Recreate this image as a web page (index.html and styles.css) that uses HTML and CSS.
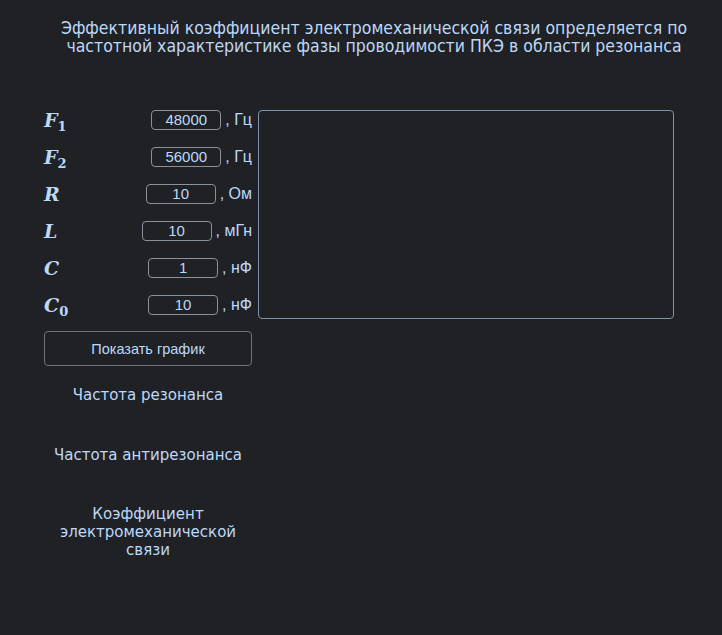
FILE: index.html
```html
<!DOCTYPE html>
<html lang="ru">
<head>
<meta charset="utf-8">
<link rel="stylesheet" href="styles.css">
</head>
<body>
<h1 class="title">Эффективный коэффициент электромеханической связи определяется по<br>частотной характеристике фазы проводимости ПКЭ в области резонанса</h1>
<div class="main">
  <div class="left">
    <div class="params">
      <div class="row"><span class="sym">F<sub>1</sub></span><span class="grp"><span class="inp">48000</span><span class="unit">, Гц</span></span></div>
      <div class="row"><span class="sym">F<sub>2</sub></span><span class="grp"><span class="inp">56000</span><span class="unit">, Гц</span></span></div>
      <div class="row"><span class="sym">R</span><span class="grp"><span class="inp">10</span><span class="unit">, Ом</span></span></div>
      <div class="row"><span class="sym">L</span><span class="grp"><span class="inp">10</span><span class="unit">, мГн</span></span></div>
      <div class="row"><span class="sym">C</span><span class="grp"><span class="inp">1</span><span class="unit">, нФ</span></span></div>
      <div class="row"><span class="sym">C<sub>0</sub></span><span class="grp"><span class="inp">10</span><span class="unit">, нФ</span></span></div>
    </div>
    <button class="btn">Показать график</button>
    <div class="res r1">Частота резонанса</div>
    <div class="res r2">Частота антирезонанса</div>
    <div class="res r3"><div>Коэффициент</div><div>электромеханической</div><div>связи</div></div>
  </div>
  <div class="graph"></div>
</div>
</body>
</html>
```

FILE: styles.css
```css
html, body {
  margin: 0;
  padding: 0;
  background: #202124;
  height: 100%;
}
body {
  color: #bcd8fa;
  font-family: "DejaVu Sans Condensed", "DejaVu Sans", sans-serif;
}
.title {
  margin: 0;
  padding-top: 19px;
  padding-left: 26px;
  font-size: 17.5px;
  font-weight: normal;
  line-height: 18px;
  text-align: center;
}
.main {
  display: flex;
  align-items: flex-start;
  margin-top: 46px;
  padding-left: 44px;
}
.left {
  width: 208px;
  display: flex;
  flex-direction: column;
}
.params {
  display: flex;
  flex-direction: column;
}
.row {
  height: 37px;
  display: flex;
  align-items: center;
  justify-content: space-between;
}
.sym {
  font-family: "DejaVu Serif", "Liberation Serif", serif;
  font-style: italic;
  font-weight: 600;
  font-size: 19px;
  line-height: 20px;
}
.sym sub {
  font-style: normal;
  font-size: 13px;
  vertical-align: -4px;
  line-height: 0;
}
.grp {
  display: flex;
  align-items: center;
}
.inp {
  box-sizing: border-box;
  width: 70px;
  height: 20px;
  border: 1px solid #8a929c;
  border-radius: 4px;
  font-family: "Liberation Sans", Arial, sans-serif;
  font-size: 15px;
  line-height: 18px;
  text-align: center;
}
.unit {
  font-family: "Liberation Sans", Arial, sans-serif;
  font-size: 16px;
  margin-left: 4px;
}
.btn {
  box-sizing: border-box;
  margin-top: 8px;
  width: 208px;
  height: 35px;
  background: transparent;
  border: 1px solid #6e747c;
  border-radius: 4px;
  color: #bcd8fa;
  font-family: "Liberation Sans", Arial, sans-serif;
  font-size: 14.5px;
  padding: 0;
}
.res {
  text-align: center;
  font-size: 16.7px;
  line-height: 18px;
}
.r1 { margin-top: 19px; }
.r2 { margin-top: 42px; }
.r3 { margin-top: 41px; }
.graph {
  box-sizing: border-box;
  margin-top: 9px;
  margin-left: 6px;
  width: 416px;
  height: 209px;
  border: 1px solid #7d92ab;
  border-radius: 4px;
}
```
